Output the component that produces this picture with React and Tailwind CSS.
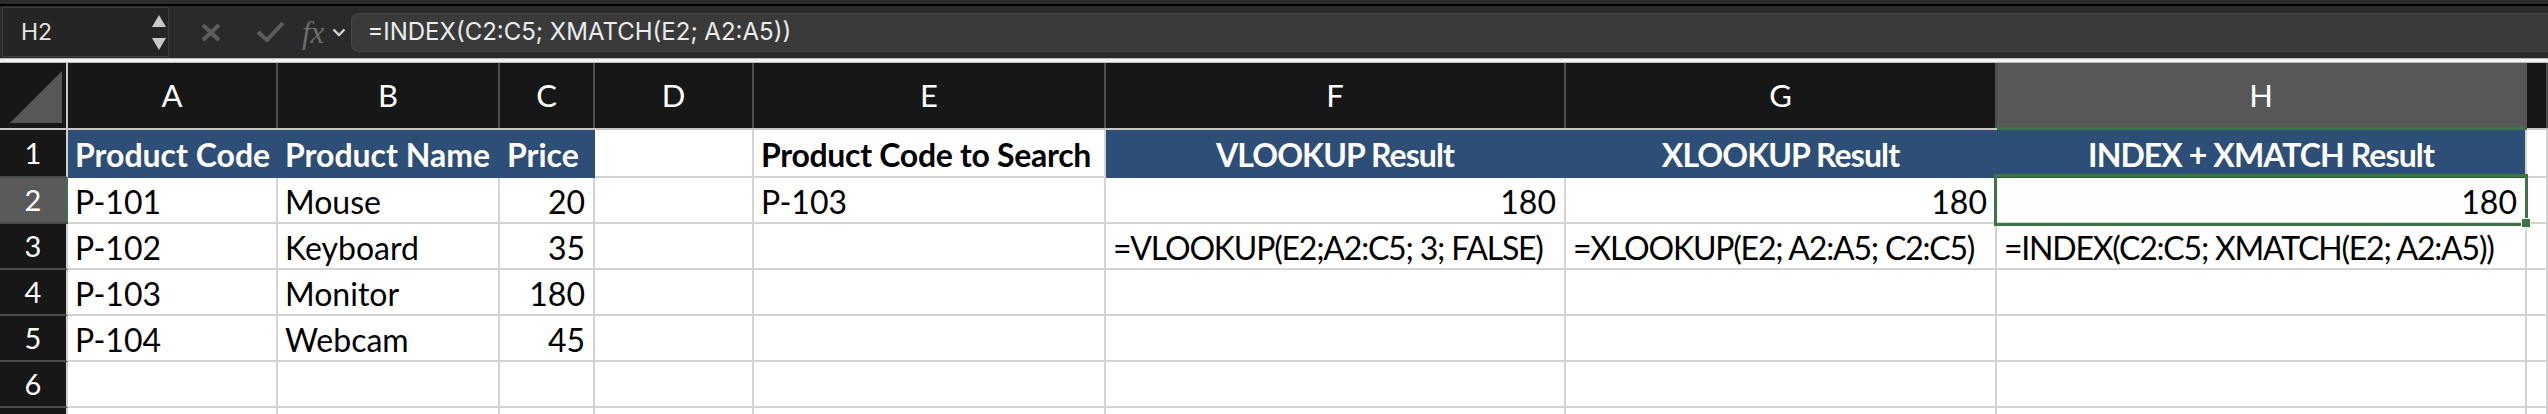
import React from 'react'

const cellFont = { fontFamily: 'Lato, "Open Sans", sans-serif' }
const uiFont = { fontFamily: 'Inter, Roboto, sans-serif' }

const columns = ['A', 'B', 'C', 'D', 'E', 'F', 'G', 'H', '']

// h: header (blue), b: bold, r: right aligned, c: centered, f: formula text (tighter)
const rows = [
  [
    { t: 'Product Code', h: true },
    { t: 'Product Name', h: true },
    { t: 'Price', h: true },
    {},
    { t: 'Product Code to Search', b: true },
    { t: 'VLOOKUP Result', h: true, c: true },
    { t: 'XLOOKUP Result', h: true, c: true },
    { t: 'INDEX + XMATCH Result', h: true, c: true, last: true },
    {},
  ],
  [
    { t: 'P-101' },
    { t: 'Mouse' },
    { t: '20', r: true },
    {},
    { t: 'P-103' },
    { t: '180', r: true },
    { t: '180', r: true },
    { t: '180', r: true },
    {},
  ],
  [
    { t: 'P-102' },
    { t: 'Keyboard' },
    { t: '35', r: true },
    {},
    {},
    { t: '=VLOOKUP(E2;A2:C5; 3; FALSE)', f: true },
    { t: '=XLOOKUP(E2; A2:A5; C2:C5)', f: true },
    { t: '=INDEX(C2:C5; XMATCH(E2; A2:A5))', f: true },
    {},
  ],
  [{ t: 'P-103' }, { t: 'Monitor' }, { t: '180', r: true }, {}, {}, {}, {}, {}, {}],
  [{ t: 'P-104' }, { t: 'Webcam' }, { t: '45', r: true }, {}, {}, {}, {}, {}, {}],
  [{}, {}, {}, {}, {}, {}, {}, {}, {}],
  [{}, {}, {}, {}, {}, {}, {}, {}, {}],
]

const gridCols = 'grid grid-cols-[68px_210px_222px_95px_159px_352px_460px_431px_530px_1fr]'

function Cell({ c }) {
  let cls = 'flex items-center overflow-visible whitespace-nowrap border-r-2 border-b-2 text-[32px] leading-none pt-[3px] '
  if (c.h) {
    cls += 'bg-[#2d4f77] text-white font-bold '
    cls += c.last ? 'border-r-[#d4d4d4] border-b-[#2d4f77] ' : 'border-[#2d4f77] '
    if (c.c) cls += 'tracking-[-0.9px] '
  } else {
    cls += 'bg-white text-black border-[#d4d4d4] '
    if (c.b) cls += 'font-bold tracking-[-0.3px] '
  }
  if (c.f) cls += 'tracking-[-1.2px] '
  if (c.c) cls += 'justify-center '
  else if (c.r) cls += 'justify-end pr-[8px] '
  else cls += 'pl-[7px] '
  return (
    <div className={cls} style={cellFont}>
      {c.t}
    </div>
  )
}

export default function App() {
  return (
    <div className="relative h-[414px] w-[2548px] overflow-hidden bg-white">
      {/* top chrome */}
      <div className="h-[4px] bg-[#2c2c2c]" />
      <div className="h-[2px] bg-black" />

      {/* formula bar */}
      <div className="flex h-[52px] items-center bg-[#2a2a2a]">
        <div className="ml-[2px] flex h-[50px] w-[167px] items-center justify-between border border-[#3d3d3d] bg-[#252525] pl-[18px] pr-[2px]">
          <span className="text-[23px] text-[#e4e4e4]" style={uiFont}>H2</span>
          <div className="flex flex-col items-center gap-[11px]">
            <svg width="14" height="12" viewBox="0 0 14 12"><path d="M7 0 L14 12 L0 12 Z" fill="#c9c9c9" /></svg>
            <svg width="14" height="12" viewBox="0 0 14 12"><path d="M0 0 L14 0 L7 12 Z" fill="#c9c9c9" /></svg>
          </div>
        </div>
        <svg className="ml-[32px]" width="20" height="19" viewBox="0 0 20 19">
          <path d="M2 2 L18 17 M18 2 L2 17" stroke="#5c5c5c" strokeWidth="4" strokeLinecap="butt" />
        </svg>
        <svg className="ml-[35px]" width="29" height="22" viewBox="0 0 29 22">
          <path d="M2 11 L11 19 L27 2" stroke="#5c5c5c" strokeWidth="4" fill="none" />
        </svg>
        <span
          className="ml-[17px] text-[31px] italic leading-none text-[#6e6e6e]"
          style={{ fontFamily: '"Liberation Serif", serif' }}
        >
          fx
        </span>
        <svg className="ml-[8px]" width="14" height="9" viewBox="0 0 14 9">
          <path d="M1.5 1.5 L7 7 L12.5 1.5" stroke="#d2d2d2" strokeWidth="2.4" fill="none" />
        </svg>
        <div className="ml-[5px] flex h-[39px] flex-1 items-center rounded-l-lg border border-r-0 border-[#474747] bg-[#3a3a3a] pl-[15px]">
          <span className="text-[24px] text-[#ececec]" style={uiFont}>=INDEX(C2:C5; XMATCH(E2; A2:A5))</span>
        </div>
      </div>

      {/* separator */}
      <div className="h-[5px] border-y border-[#bdbdbd] bg-[#f2f2f2]" />

      {/* column headers */}
      <div className={`${gridCols} h-[67px] border-b-2 border-[#c6c6c6] bg-[#171717]`}>
        <div className="flex items-end justify-end border-r-2 border-[#c6c6c6] pb-[5px] pr-[4px]">
          <svg width="52" height="52" viewBox="0 0 52 52"><path d="M0 52 L52 52 L52 0 Z" fill="#575757" /></svg>
        </div>
        {columns.map((col, i) => (
          <div
            key={i}
            className={
              col === 'H'
                ? 'flex items-center justify-center border-b-[3px] border-r-2 border-b-[#3c7447] border-r-[#555] bg-[#575757] text-[31px] text-white -mb-[2px]'
                : 'flex items-center justify-center border-r-2 border-[#4e4e4e] text-[31px] text-white'
            }
            style={cellFont}
          >
            {col}
          </div>
        ))}
      </div>

      {/* body rows */}
      {rows.map((row, r) => (
        <div key={r} className={`${gridCols} ${r === 0 ? 'h-[48px]' : 'h-[46px]'}`}>
          <div
            className={
              r === 1
                ? 'flex items-center justify-center border-b-2 border-r-2 border-b-[#4a4a4a] border-r-[#3c7447] bg-[#5a5a5a] text-[29px] text-white'
                : 'flex items-center justify-center border-b-2 border-r-2 border-b-[#4a4a4a] border-r-[#cfcfcf] bg-[#171717] text-[29px] text-white'
            }
            style={cellFont}
          >
            {r < 6 ? r + 1 : ''}
          </div>
          {row.map((c, i) => (
            <Cell key={i} c={c} />
          ))}
        </div>
      ))}

      {/* selected cell H2 */}
      <div className="absolute left-[1994px] top-[174px] h-[52px] w-[534px] border-[3px] border-[#3c7447]" />
      <div className="absolute left-[2521px] top-[218px] h-[10px] w-[10px] border border-white bg-[#3c7447]" />
    </div>
  )
}
